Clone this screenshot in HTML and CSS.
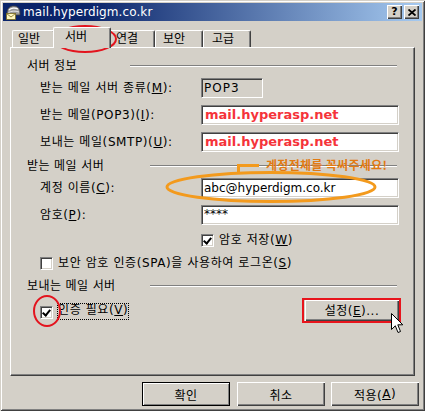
FILE: index.html
```html
<!DOCTYPE html>
<html>
<head>
<meta charset="utf-8">
<title>mail.hyperdigm.co.kr</title>
<link rel="stylesheet" href="styles.css">
</head>
<body>
<div class="window">
  <div class="titlebar">
    <svg class="app-icon" width="16" height="16" viewBox="0 0 16 16">
      <path d="M2 10 C2 4 5 2 9 2 C13 2 15 5 15 9 L15 11 L2 11 Z" fill="#9a9a9a" stroke="#404040" stroke-width="0.8"/>
      <path d="M4 6 C6 4 10 3.5 13 5" stroke="#fff" stroke-width="1.2" fill="none"/>
      <path d="M3.5 8.5 C6 7 10 6.5 14 8" stroke="#e8e8e8" stroke-width="1" fill="none"/>
      <rect x="1.5" y="9.5" width="9" height="6" fill="#fff8c0" stroke="#7a6a20" stroke-width="0.8"/>
      <path d="M1.5 9.5 L6 13 L10.5 9.5" stroke="#7a6a20" stroke-width="0.8" fill="none"/>
    </svg>
    <span class="title">mail.hyperdigm.co.kr</span>
    <div class="caption-btns">
      <div class="cbtn q">?</div>
      <div class="cbtn">
        <svg width="8" height="7" viewBox="0 0 8 7"><path d="M0.5 0.5 L7.5 6.5 M7.5 0.5 L0.5 6.5" stroke="#000" stroke-width="1.8"/></svg>
      </div>
    </div>
  </div>

  <div class="tabs">
    <div class="tab w-general">일반</div>
    <div class="tab active">서버</div>
    <div class="tab w-conn">연결</div>
    <div class="tab w-sec">보안</div>
    <div class="tab w-adv">고급</div>
  </div>

  <div class="panel">
    <div class="group"><span class="gtext">서버 정보</span><i class="line line-long"></i></div>
    <div class="row mt5">
      <span class="label">받는 메일 서버 종류(<u>M</u>):</span>
      <div class="field ro">POP3</div>
    </div>
    <div class="row mt7">
      <span class="label">받는 메일(POP3)(<u>I</u>):</span>
      <div class="field wide red">mail.hyperasp.net</div>
    </div>
    <div class="row mt7">
      <span class="label">보내는 메일(SMTP)(<u>U</u>):</span>
      <div class="field wide red">mail.hyperasp.net</div>
    </div>

    <div class="group mt7"><span class="gtext">받는 메일 서버</span><i class="line line-short"></i></div>
    <div class="row mt5">
      <span class="label">계정 이름(<u>C</u>):</span>
      <div class="field wide">abc@hyperdigm.co.kr</div>
    </div>
    <div class="row mt7">
      <span class="label">암호(<u>P</u>):</span>
      <div class="field wide pw">****</div>
    </div>
    <div class="crow mt8 indent-field">
      <span class="chk checked"></span><span class="clabel">암호 저장(<u>W</u>)</span>
    </div>
    <div class="crow mt9 indent">
      <span class="chk"></span><span class="clabel">보안 암호 인증(SPA)을 사용하여 로그온(<u>S</u>)</span>
    </div>

    <div class="group mt9"><span class="gtext">보내는 메일 서버</span><i class="line line-short"></i></div>
    <div class="arow mt7">
      <span class="chk checked a-chk"></span>
      <span class="clabel focus">인증 필요(<u>V</u>)</span>
      <div class="btn settings">설정(<u>E</u>)...</div>
    </div>
  </div>

  <div class="buttons">
    <div class="btn dlg default"><span>확인</span></div>
    <div class="btn dlg">취소</div>
    <div class="btn dlg">적용(<u>A</u>)</div>
  </div>

  <!-- annotations drawn over the screenshot -->
  <svg class="ann tab-ring" width="66" height="30" viewBox="0 0 66 30"><ellipse cx="33" cy="15" rx="31" ry="13" fill="none" stroke="#e3141e" stroke-width="2"/></svg>
  <div class="note">계정전체를 꼭써주세요!</div>
  <svg class="ann bracket" width="24" height="10" viewBox="0 0 24 10"><path d="M1.5 9 L1.5 1.5 L22 1.5" fill="none" stroke="#f39a1d" stroke-width="3"/></svg>
  <svg class="ann acct-ring" width="214" height="34" viewBox="0 0 214 34"><ellipse cx="107" cy="17" rx="104" ry="14.5" fill="none" stroke="#f39a1d" stroke-width="3"/></svg>
  <svg class="ann chk-ring" width="30" height="34" viewBox="0 0 30 34"><ellipse cx="15" cy="17" rx="13" ry="15" fill="none" stroke="#e3141e" stroke-width="2"/></svg>
  <div class="ann btn-box"></div>
  <svg class="ann cursor" width="13" height="21" viewBox="0 0 13 21"><path d="M0.5 0.5 L0.5 16.5 L4.3 12.8 L7 19.5 L9.5 18.5 L6.8 11.8 L11.8 11.8 Z" fill="#fff" stroke="#000" stroke-width="1"/></svg>
</div>
</body>
</html>
```
FILE: styles.css
```css
* { box-sizing: border-box; margin: 0; padding: 0; }
html, body { width: 425px; height: 411px; overflow: hidden; background: #d4d0c8; }
body {
  font-family: "DejaVu Sans", "Noto Sans CJK KR", sans-serif;
  font-size: 12px;
  color: #000;
}
u { text-decoration: underline; text-underline-offset: 1px; }

.window {
  position: relative;
  width: 425px;
  height: 411px;
  background: #d4d0c8;
  padding: 3px;
  display: flex;
  flex-direction: column;
  box-shadow: inset 1px 1px 0 #d4d0c8, inset -1px -1px 0 #404040,
              inset 2px 2px 0 #ffffff, inset -2px -2px 0 #808080;
}

/* title bar */
.titlebar {
  height: 18px;
  display: flex;
  align-items: center;
  background: linear-gradient(to right, #0a246a 0%, #0a246a 20%, #a6caf0 100%);
  color: #fff;
  padding: 0 3px 0 2px;
}
.app-icon { flex: none; }
.title { margin-left: 2px; font-size: 12px; line-height: 18px; letter-spacing: 0.1px; }
.caption-btns { margin-left: auto; display: flex; gap: 2px; }
.cbtn {
  width: 15px; height: 14px;
  background: #d4d0c8;
  display: flex; align-items: center; justify-content: center;
  font-weight: bold; font-size: 11px; color: #000; line-height: 12px;
  box-shadow: inset 1px 1px 0 #fff, inset -1px -1px 0 #404040, inset -2px -2px 0 #808080;
}

/* tabs */
.tabs {
  margin-top: 6px;
  height: 20px;
  display: flex;
  align-items: flex-end;
  padding-left: 9px;
}
.tab {
  height: 17px;
  padding-left: 5px;
  line-height: 16px;
  background: #d4d0c8;
  border-top: 1px solid #fff;
  border-left: 1px solid #fff;
  border-right: 1px solid #404040;
  border-radius: 2px 2px 0 0;
  box-shadow: inset -1px 0 0 #808080;
  white-space: nowrap;
}
.w-general { width: 43px; }
.w-conn { width: 46px; padding-left: 6px; }
.w-sec { width: 48px; padding-left: 7px; }
.w-adv { width: 48px; padding-left: 8px; }
.tab.active {
  width: 58px;
  height: 21px;
  margin: 0 -2px -1px -2px;
  padding-left: 11px;
  line-height: 18px;
  position: relative;
  z-index: 1;
}

/* panel */
.panel {
  margin-left: 7px;
  width: 405px;
  height: 329px;
  border: 1px solid;
  border-color: #fff #404040 #404040 #fff;
  box-shadow: inset -1px -1px 0 #808080;
  padding: 11px 15px 0 16px;
  display: flex;
  flex-direction: column;
}
.mt5 { margin-top: 5px; }
.mt7 { margin-top: 7px; }
.mt8 { margin-top: 8px; }
.mt9 { margin-top: 9px; }

.group {
  height: 14px;
  line-height: 14px;
  display: flex;
  align-items: center;
  white-space: nowrap;
}
.gtext { letter-spacing: 0.4px; }
.line {
  display: block;
  margin-left: auto;
  margin-right: 2px;
  height: 2px;
  border-top: 1px solid #808080;
  border-bottom: 1px solid #fff;
}
.line-long { width: 267px; }
.line-short { width: 247px; }

.row {
  height: 20px;
  display: flex;
  align-items: center;
  padding-left: 13px;
}
.label { width: 161px; white-space: nowrap; line-height: 14px; letter-spacing: 0.6px; }

.field {
  height: 20px;
  background: #fff;
  border: 1px solid;
  border-color: #808080 #fff #fff #808080;
  box-shadow: inset 1px 1px 0 #404040, inset -1px -1px 0 #d4d0c8;
  padding-left: 2px;
  line-height: 18px;
  white-space: nowrap;
  overflow: hidden;
}
.field.ro { width: 62px; background: #d4d0c8; letter-spacing: 1px; }
.field.wide { width: 198px; }
.field.red { color: #f5333a; font-weight: bold; font-size: 13px; padding-left: 3px; }
.field.pw { line-height: 16px; }

/* checkboxes */
.crow { height: 14px; display: flex; align-items: center; }
.indent { padding-left: 13px; }
.indent-field { padding-left: 174px; }
.chk {
  flex: none;
  position: relative;
  width: 13px; height: 13px;
  background: #fff;
  border: 1px solid;
  border-color: #808080 #fff #fff #808080;
  box-shadow: inset 1px 1px 0 #404040, inset -1px -1px 0 #d4d0c8;
}
.chk.checked::after {
  content: "";
  position: absolute;
  left: 3px; top: 1px;
  width: 3px; height: 6px;
  border: solid #000;
  border-width: 0 2px 2px 0;
  transform: rotate(40deg);
  transform-origin: center;
}
.clabel { margin-left: 5px; line-height: 14px; white-space: nowrap; letter-spacing: 0.6px; }

.arow {
  height: 21px;
  display: flex;
  align-items: flex-start;
  padding-left: 13px;
}
.a-chk { margin-top: 6px; }
.focus {
  margin-top: 3px;
  height: 17px;
  line-height: 15px;
  padding: 0 1px;
  margin-left: 4px;
  outline: 1px dotted #000;
  outline-offset: -1px;
}

/* buttons */
.btn {
  background: #d4d0c8;
  display: flex; align-items: center; justify-content: center;
  box-shadow: inset 1px 1px 0 #fff, inset -1px -1px 0 #404040, inset -2px -2px 0 #808080;
  white-space: nowrap;
  letter-spacing: 0.5px;
}
.settings { margin-left: auto; width: 94px; height: 21px; line-height: 14px; }

.buttons {
  margin-top: 6px;
  display: flex;
  justify-content: flex-end;
  gap: 6px;
  padding-right: 3px;
}
.dlg { width: 88px; height: 24px; }
.dlg.default {
  margin-right: 1px;
  border: 1px solid #000;
  box-shadow: inset 1px 1px 0 #fff, inset -1px -1px 0 #808080;
}

/* overlays */
.ann { position: absolute; pointer-events: none; }
.tab-ring { left: 52px; top: 24px; }
.note {
  position: absolute;
  left: 266px; top: 158px;
  font-family: "Noto Sans CJK KR", sans-serif;
  font-weight: bold;
  font-size: 12px;
  line-height: 14px;
  color: #e27a12;
  white-space: nowrap;
  letter-spacing: 0.3px;
}
.bracket { left: 237px; top: 164px; }
.acct-ring { left: 164px; top: 170px; }
.chk-ring { left: 32px; top: 294px; }
.btn-box { left: 302px; top: 298px; width: 99px; height: 25px; border: 2px solid #e8141c; }
.cursor { left: 391px; top: 313px; }
```
